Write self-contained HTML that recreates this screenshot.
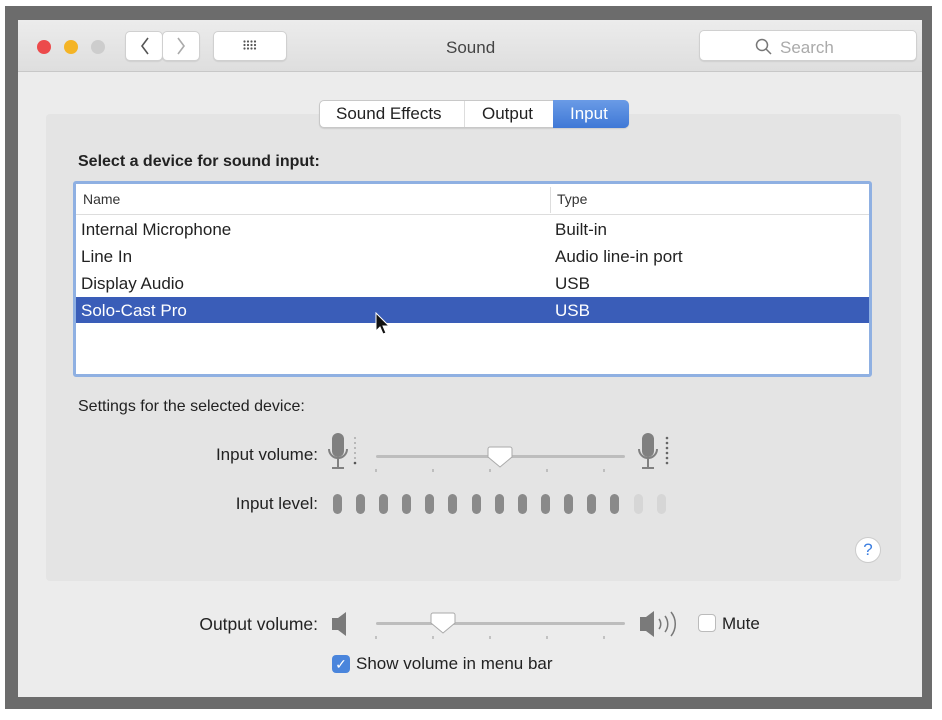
<!DOCTYPE html>
<html><head><style>
*{margin:0;padding:0;box-sizing:border-box}
body{width:942px;height:720px;background:#fff;position:relative;overflow:hidden;font-family:"Liberation Sans",sans-serif;color:#222}
.a{position:absolute}
.frame{left:5px;top:6px;width:927px;height:703px;background:#6c6c6c}
.win{left:18px;top:20px;width:904px;height:677px;background:#ececec}
.title{left:18px;top:20px;width:904px;height:52px;background:linear-gradient(#ececec,#dedede);border-bottom:1px solid #c8c8c8}
.dot{width:14px;height:14px;border-radius:50%;top:40px}
.btn{background:#fff;border:1px solid #d0d0d0;border-radius:5px;box-shadow:0 1px 1px rgba(0,0,0,.08)}
.t{font-size:17px;white-space:nowrap}
.r{text-align:right;width:200px}
.group{left:46px;top:114px;width:855px;height:467px;background:#e4e4e4;border-radius:4px}
.tbl{left:73px;top:181px;width:799px;height:196px;background:#fff;border:3px solid #8fb0e2;border-radius:3px}
.bar{width:9px;height:20px;border-radius:5px;background:#8a8a8a;top:494px}
</style></head><body>
<div class="a frame"></div>
<div class="a win"></div>
<div class="a title"></div>
<div class="a dot" style="left:37px;background:#ec4a4b"></div>
<div class="a dot" style="left:64px;background:#f4b426"></div>
<div class="a dot" style="left:91px;background:#cdcdcd"></div>
<div class="a btn" style="left:125px;top:31px;width:38px;height:30px"></div>
<div class="a btn" style="left:162px;top:31px;width:38px;height:30px"></div>
<svg class="a" style="left:125px;top:31px" width="76" height="30"><path d="M23 7l-6 8 6 8" fill="none" stroke="#555" stroke-width="1.6"/><path d="M53 7l6 8-6 8" fill="none" stroke="#aaa" stroke-width="1.6"/></svg>
<div class="a btn" style="left:213px;top:31px;width:74px;height:30px"></div>
<svg class="a" style="left:243px;top:40px" width="16" height="14"><g fill="#555"><circle cx="1.5" cy="1.5" r="1.1"/><circle cx="5" cy="1.5" r="1.1"/><circle cx="8.5" cy="1.5" r="1.1"/><circle cx="12" cy="1.5" r="1.1"/><circle cx="1.5" cy="5" r="1.1"/><circle cx="5" cy="5" r="1.1"/><circle cx="8.5" cy="5" r="1.1"/><circle cx="12" cy="5" r="1.1"/><circle cx="1.5" cy="8.5" r="1.1"/><circle cx="5" cy="8.5" r="1.1"/><circle cx="8.5" cy="8.5" r="1.1"/><circle cx="12" cy="8.5" r="1.1"/></g></svg>
<div class="a t" style="left:446px;top:38px;color:#444">Sound</div>
<div class="a btn" style="left:699px;top:30px;width:218px;height:31px"></div>
<svg class="a" style="left:755px;top:38px" width="18" height="18"><circle cx="7" cy="7" r="5.5" fill="none" stroke="#777" stroke-width="1.5"/><path d="M11 11l5 5" stroke="#777" stroke-width="1.5"/></svg>
<div class="a t" style="left:780px;top:38px;color:#aaa">Search</div>
<div class="a group"></div>
<div class="a" style="left:319px;top:100px;width:310px;height:28px;background:#fff;border:1px solid #c8c8c8;border-radius:5px;box-shadow:0 1px 1px rgba(0,0,0,.1)"></div>
<div class="a" style="left:464px;top:101px;width:1px;height:26px;background:#ddd"></div>
<div class="a" style="left:553px;top:100px;width:76px;height:28px;background:linear-gradient(#6a9be6,#3f78d6);border-radius:0 5px 5px 0"></div>
<div class="a t" style="left:336px;top:104px">Sound Effects</div>
<div class="a t" style="left:482px;top:104px">Output</div>
<div class="a t" style="left:570px;top:104px;color:#fff">Input</div>
<div class="a t" style="left:78px;top:153px;font-weight:bold;font-size:16px">Select a device for sound input:</div>
<div class="a tbl"></div>
<div class="a" style="left:76px;top:214px;width:793px;height:1px;background:#ddd"></div>
<div class="a" style="left:550px;top:187px;width:1px;height:26px;background:#ddd"></div>
<div class="a" style="left:76px;top:297px;width:793px;height:26px;background:#3a5db8"></div>
<div class="a t" style="left:83px;top:191px;font-size:14px;color:#333">Name</div>
<div class="a t" style="left:557px;top:191px;font-size:14px;color:#333">Type</div>
<div class="a t" style="left:81px;top:220px">Internal Microphone</div>
<div class="a t" style="left:81px;top:247px">Line In</div>
<div class="a t" style="left:81px;top:274px">Display Audio</div>
<div class="a t" style="left:81px;top:301px;color:#fff">Solo-Cast Pro</div>
<div class="a t" style="left:555px;top:220px">Built-in</div>
<div class="a t" style="left:555px;top:247px">Audio line-in port</div>
<div class="a t" style="left:555px;top:274px">USB</div>
<div class="a t" style="left:555px;top:301px;color:#fff">USB</div>
<svg class="a" style="left:374px;top:312px" width="16" height="24"><path d="M2 1v18l4-4 3 7 3-1-3-7h6z" fill="#111" stroke="#fff" stroke-width="1"/></svg>
<div class="a t" style="left:78px;top:398px;font-size:16px">Settings for the selected device:</div>
<div class="a t r" style="left:118px;top:445px">Input volume:</div>
<div class="a t r" style="left:118px;top:494px">Input level:</div>
<svg class="a" style="left:328px;top:432px" width="32" height="42"><rect x="4" y="1" width="12" height="24" rx="6" fill="#808080"/><path d="M1 17a9 9 0 0 0 18 0" fill="none" stroke="#808080" stroke-width="2"/><path d="M10 26v9M4 36h12" stroke="#808080" stroke-width="2"/><g fill="#aaa"><circle cx="27" cy="6" r="1"/><circle cx="27" cy="11" r="1"/><circle cx="27" cy="16" r="1"/><circle cx="27" cy="21" r="1"/><circle cx="27" cy="26" r="1"/></g><circle cx="27" cy="31" r="1.3" fill="#555"/></svg>
<svg class="a" style="left:638px;top:432px" width="32" height="42"><rect x="4" y="1" width="12" height="24" rx="6" fill="#808080"/><path d="M1 17a9 9 0 0 0 18 0" fill="none" stroke="#808080" stroke-width="2"/><path d="M10 26v9M4 36h12" stroke="#808080" stroke-width="2"/><g fill="#666"><circle cx="29" cy="6" r="1.3"/><circle cx="29" cy="11" r="1.3"/><circle cx="29" cy="16" r="1.3"/><circle cx="29" cy="21" r="1.3"/><circle cx="29" cy="26" r="1.3"/><circle cx="29" cy="31" r="1.3"/></g></svg>
<div class="a" style="left:376px;top:455px;width:249px;height:3px;background:#bdbdbd;border-radius:2px"></div>
<svg class="a" style="left:366px;top:444px" width="270" height="30"><g stroke="#999"><path d="M10 25v3M67 25v3M124 25v3M181 25v3M238 25v3"/></g><path d="M124 3h-10a2 2 0 0 0-2 2v8l12 10 12-10V5a2 2 0 0 0-2-2z" transform="translate(10 0)" fill="#fff" stroke="#aaa"/></svg>
<div class="a bar" style="left:333px"></div><div class="a bar" style="left:356px"></div><div class="a bar" style="left:379px"></div><div class="a bar" style="left:402px"></div><div class="a bar" style="left:425px"></div><div class="a bar" style="left:448px"></div><div class="a bar" style="left:472px"></div><div class="a bar" style="left:495px"></div><div class="a bar" style="left:518px"></div><div class="a bar" style="left:541px"></div><div class="a bar" style="left:564px"></div><div class="a bar" style="left:587px"></div><div class="a bar" style="left:610px"></div><div class="a bar" style="left:634px;background:#d6d6d6"></div><div class="a bar" style="left:657px;background:#d6d6d6"></div>
<div class="a" style="left:855px;top:537px;width:26px;height:26px;border-radius:50%;background:#fff;border:1px solid #ccc;color:#3d7fe0;font-size:17px;text-align:center;line-height:24px">?</div>
<div class="a t r" style="left:118px;top:614px;font-size:17.5px">Output volume:</div>
<svg class="a" style="left:330px;top:610px" width="22" height="28"><path d="M2 8h6l8-6v24l-8-6H2z" fill="#7a7a7a"/></svg>
<div class="a" style="left:376px;top:622px;width:249px;height:3px;background:#bdbdbd;border-radius:2px"></div>
<svg class="a" style="left:366px;top:610px" width="270" height="30"><g stroke="#999"><path d="M10 26v3M67 26v3M124 26v3M181 26v3M238 26v3"/></g><path d="M67 3H57a2 2 0 0 0-2 2v8l12 10 12-10V5a2 2 0 0 0-2-2z" transform="translate(10 0)" fill="#fff" stroke="#aaa"/></svg>
<svg class="a" style="left:638px;top:606px" width="48" height="36"><path d="M2 11h6l8-6v26l-8-6H2z" fill="#7a7a7a"/><g fill="none" stroke="#777" stroke-width="1.5"><path d="M21 13a8 8 0 0 1 0 10"/><path d="M27 10a13 13 0 0 1 0 16"/><path d="M33 6a19 19 0 0 1 0 24"/></g></svg>
<div class="a" style="left:698px;top:614px;width:18px;height:18px;background:#fff;border:1px solid #bbb;border-radius:4px"></div>
<div class="a t" style="left:722px;top:614px">Mute</div>
<div class="a" style="left:332px;top:655px;width:18px;height:18px;background:#4a85dc;border-radius:4px;color:#fff;font-size:14px;text-align:center;line-height:18px">✓</div>
<div class="a t" style="left:356px;top:654px">Show volume in menu bar</div>
</body></html>
